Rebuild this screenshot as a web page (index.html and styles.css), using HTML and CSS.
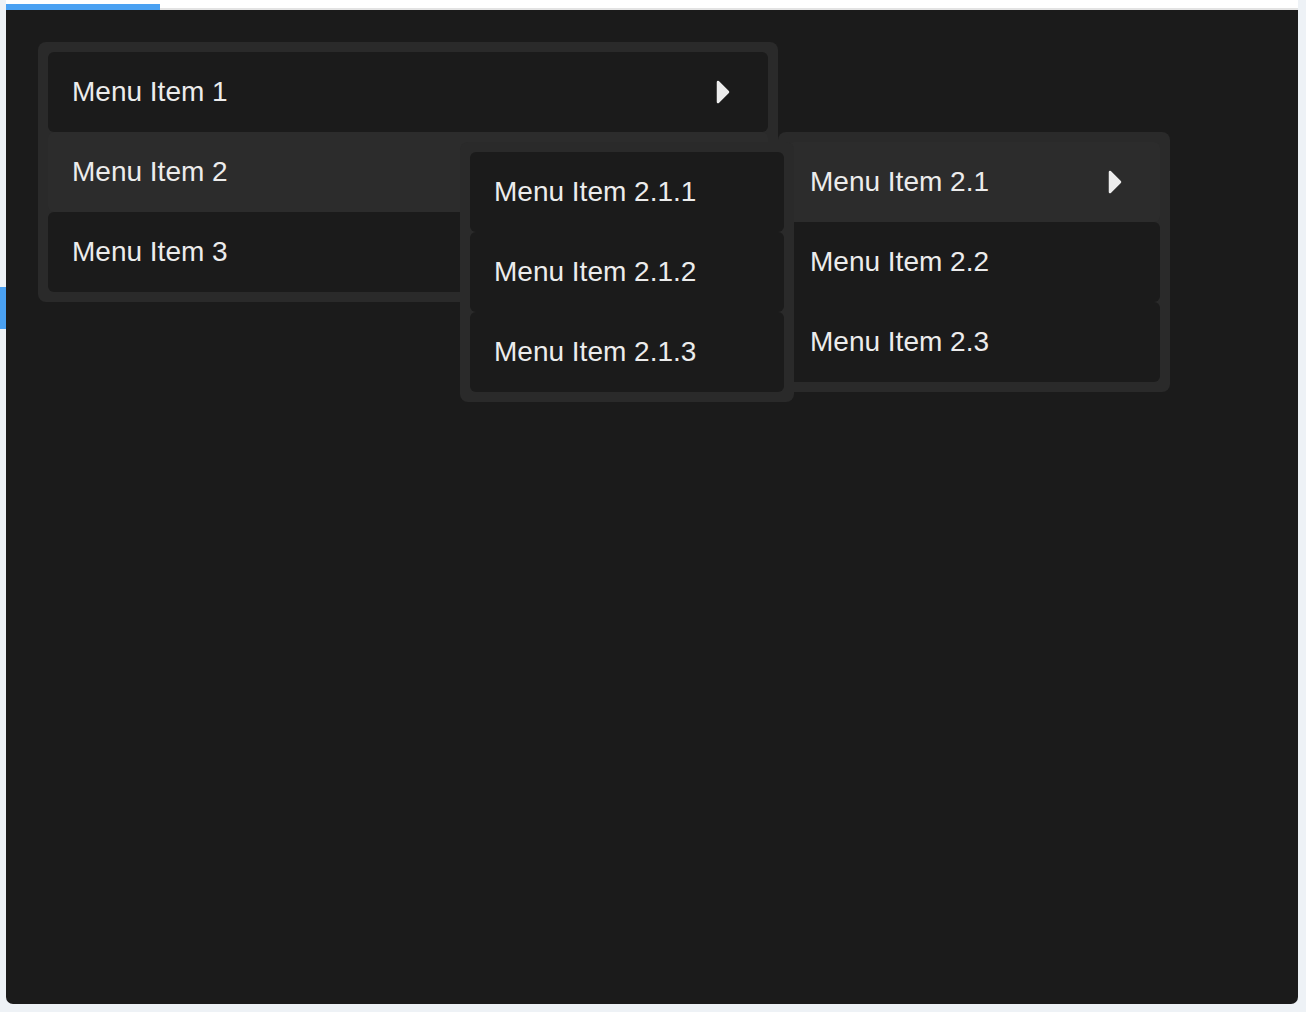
FILE: index.html
```html
<!DOCTYPE html>
<html>
<head>
<meta charset="utf-8">
<link rel="stylesheet" href="styles.css">
</head>
<body>
<div class="frame">
  <div class="side-left"><div class="side-marker"></div></div>
  <div class="main-col">
    <div class="topbar"><div class="progress"></div></div>
    <div class="panel">
      <div class="menu main-menu">
        <div class="item">
          <span class="label">Menu Item 1</span>
          <svg class="arrow" viewBox="0 0 14 24" width="14" height="24"><polygon points="2,2 12,12 2,22" /></svg>
        </div>
        <div class="item active has-sub">
          <span class="label">Menu Item 2</span>
          <div class="menu sub sub-2">
            <div class="item active has-sub">
              <span class="label">Menu Item 2.1</span>
              <svg class="arrow" viewBox="0 0 14 24" width="14" height="24"><polygon points="2,2 12,12 2,22" /></svg>
              <div class="menu sub sub-21">
                <div class="item"><span class="label">Menu Item 2.1.1</span></div>
                <div class="item"><span class="label">Menu Item 2.1.2</span></div>
                <div class="item"><span class="label">Menu Item 2.1.3</span></div>
              </div>
            </div>
            <div class="item"><span class="label">Menu Item 2.2</span></div>
            <div class="item"><span class="label">Menu Item 2.3</span></div>
          </div>
        </div>
        <div class="item">
          <span class="label">Menu Item 3</span>
        </div>
      </div>
    </div>
  </div>
  <div class="side-right"></div>
</div>
</body>
</html>
```

FILE: styles.css
```css
html, body {
  margin: 0;
  padding: 0;
  background: #eef2f6;
  font-family: "Liberation Sans", Arial, sans-serif;
}

.frame {
  display: flex;
  width: 1306px;
  height: 1012px;
}

.side-left {
  width: 6px;
  flex: none;
  padding-top: 287px;
  box-sizing: border-box;
}

.side-marker {
  width: 6px;
  height: 42px;
  background: #4aa1f2;
}

.side-right {
  width: 8px;
  flex: none;
}

.main-col {
  flex: 1;
  display: flex;
  flex-direction: column;
}

.topbar {
  height: 10px;
  flex: none;
  background: #ffffff;
  border-bottom: 2px solid #e3e3e3;
  box-sizing: border-box;
  position: relative;
}

.progress {
  position: absolute;
  left: 0;
  top: 4px;
  width: 154px;
  height: 6px;
  background: #4aa1f2;
}

.panel {
  height: 994px;
  flex: none;
  background: #1b1b1b;
  border-radius: 0 0 7px 7px;
  padding: 32px;
  box-sizing: border-box;
}

.menu {
  background: #2a2a2a;
  border-radius: 8px;
  padding: 10px;
  display: flex;
  flex-direction: column;
}

.main-menu {
  width: 740px;
  box-sizing: border-box;
}

.item {
  position: relative;
  height: 80px;
  display: flex;
  align-items: center;
  justify-content: space-between;
  padding: 0 38px 0 24px;
  background: #1b1b1b;
  border-radius: 6px;
  color: #ececec;
  font-size: 28px;
}

.item.active {
  background: #2c2c2c;
}

.label {
  white-space: nowrap;
}

.arrow {
  display: block;
  fill: #ededed;
  stroke: #ededed;
  stroke-width: 2.5;
  stroke-linejoin: round;
}

.sub {
  position: absolute;
  top: -10px;
  box-sizing: border-box;
}

.sub-2 {
  left: calc(100% + 10px);
  top: 0;
  width: 392px;
  z-index: 1;
}

.sub-2 > .item {
  padding-left: 22px;
}

.sub-21 {
  left: -328px;
  top: 0;
  width: 334px;
  z-index: 2;
}

.sub-21 > .item {
  padding-left: 24px;
}
```
